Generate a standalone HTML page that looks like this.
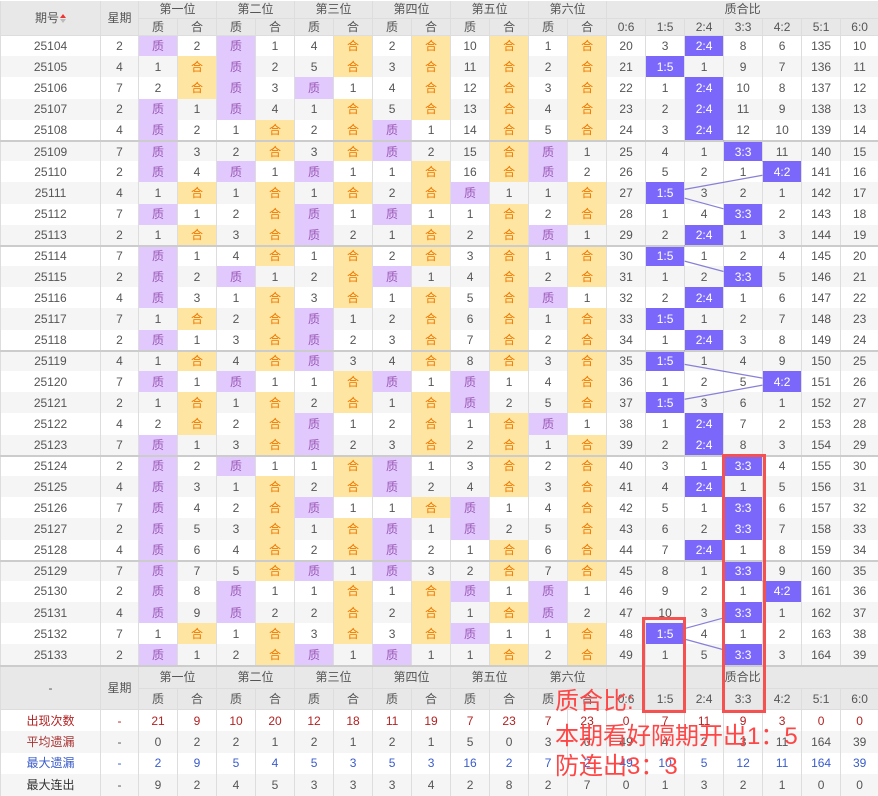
<!DOCTYPE html>
<html><head><meta charset="utf-8">
<style>
*{margin:0;padding:0;box-sizing:border-box}
body{width:878px;height:793px;background:#fff;position:relative;overflow:hidden;font-family:"Liberation Sans","Noto Sans CJK SC",sans-serif;font-size:12px;color:#555}
table{border-collapse:collapse;table-layout:fixed;width:878px;position:absolute;left:0;top:1px}
td,th{text-align:center;vertical-align:middle;padding:0;border-left:1px solid #ddd;border-right:1px solid #ddd;white-space:nowrap;overflow:hidden;line-height:14px}
th{background:#e8e8e8;font-weight:normal;color:#555;border-bottom:1px solid #ddd}
tr.h1 th{height:17px}
tr.h2 th{height:17px}
tbody tr td{height:21.2px}
tbody tr:nth-child(even) td{background:#f5f5f5}
tr.s td{border-top:2px solid #ccc;height:20.2px}
td.z,tbody tr:nth-child(even) td.z{background:#e1c8fd;color:#9b59b6}
td.h,tbody tr:nth-child(even) td.h{background:#fee6a2;color:#f07800}
td.r,tbody tr:nth-child(even) td.r{background:#7b68fa;color:#fff}
.g{border-left:1px solid #c4c4c4}
tr.f1 th{height:23px}
tr.f2 th{height:21px}
.k td{height:21.5px}
.rd td{color:#b22222}
.bl td{color:#3a5ccc}
.sort{display:inline-block;width:6px;height:9px;vertical-align:-1px;margin-left:1px;position:relative}
.sort:before{content:"";position:absolute;left:0;top:0;border:3px solid transparent;border-bottom:4px solid #e33;border-top:0}
.sort:after{content:"";position:absolute;left:0;top:5px;border:3px solid transparent;border-top:4px solid #bbb;border-bottom:0}
.box{position:absolute;border:3px solid #f55151}
.note{position:absolute;left:555px;color:#ff4646;font-size:24px;line-height:24px;font-family:"Liberation Sans","Noto Sans CJK SC",sans-serif;white-space:nowrap}
svg{position:absolute;left:0;top:0}
</style></head><body>
<table id="t">
<colgroup><col style="width:100px"><col style="width:38px"><col span="12" style="width:39px"><col span="6" style="width:39px"><col style="width:38px"></colgroup>
<thead>
<tr class="h1"><th rowspan="2">期号<span class="sort"></span></th><th rowspan="2" class="g">星期</th><th colspan="2" class="g">第一位</th><th colspan="2" class="g">第二位</th><th colspan="2" class="g">第三位</th><th colspan="2" class="g">第四位</th><th colspan="2" class="g">第五位</th><th colspan="2" class="g">第六位</th><th colspan="7" class="g">质合比</th></tr>
<tr class="h2"><th class="g">质</th><th>合</th><th class="g">质</th><th>合</th><th class="g">质</th><th>合</th><th class="g">质</th><th>合</th><th class="g">质</th><th>合</th><th class="g">质</th><th>合</th><th class="g">0:6</th><th>1:5</th><th>2:4</th><th>3:3</th><th>4:2</th><th>5:1</th><th>6:0</th></tr>
</thead>
<tbody>
<tr><td>25104</td><td class="g">2</td><td class="z g">质</td><td>2</td><td class="z g">质</td><td>1</td><td class="g">4</td><td class="h">合</td><td class="g">2</td><td class="h">合</td><td class="g">10</td><td class="h">合</td><td class="g">1</td><td class="h">合</td><td class="g">20</td><td>3</td><td class="r">2:4</td><td>8</td><td>6</td><td>135</td><td>10</td></tr>
<tr><td>25105</td><td class="g">4</td><td class="g">1</td><td class="h">合</td><td class="z g">质</td><td>2</td><td class="g">5</td><td class="h">合</td><td class="g">3</td><td class="h">合</td><td class="g">11</td><td class="h">合</td><td class="g">2</td><td class="h">合</td><td class="g">21</td><td class="r">1:5</td><td>1</td><td>9</td><td>7</td><td>136</td><td>11</td></tr>
<tr><td>25106</td><td class="g">7</td><td class="g">2</td><td class="h">合</td><td class="z g">质</td><td>3</td><td class="z g">质</td><td>1</td><td class="g">4</td><td class="h">合</td><td class="g">12</td><td class="h">合</td><td class="g">3</td><td class="h">合</td><td class="g">22</td><td>1</td><td class="r">2:4</td><td>10</td><td>8</td><td>137</td><td>12</td></tr>
<tr><td>25107</td><td class="g">2</td><td class="z g">质</td><td>1</td><td class="z g">质</td><td>4</td><td class="g">1</td><td class="h">合</td><td class="g">5</td><td class="h">合</td><td class="g">13</td><td class="h">合</td><td class="g">4</td><td class="h">合</td><td class="g">23</td><td>2</td><td class="r">2:4</td><td>11</td><td>9</td><td>138</td><td>13</td></tr>
<tr><td>25108</td><td class="g">4</td><td class="z g">质</td><td>2</td><td class="g">1</td><td class="h">合</td><td class="g">2</td><td class="h">合</td><td class="z g">质</td><td>1</td><td class="g">14</td><td class="h">合</td><td class="g">5</td><td class="h">合</td><td class="g">24</td><td>3</td><td class="r">2:4</td><td>12</td><td>10</td><td>139</td><td>14</td></tr>
<tr class="s"><td>25109</td><td class="g">7</td><td class="z g">质</td><td>3</td><td class="g">2</td><td class="h">合</td><td class="g">3</td><td class="h">合</td><td class="z g">质</td><td>2</td><td class="g">15</td><td class="h">合</td><td class="z g">质</td><td>1</td><td class="g">25</td><td>4</td><td>1</td><td class="r">3:3</td><td>11</td><td>140</td><td>15</td></tr>
<tr><td>25110</td><td class="g">2</td><td class="z g">质</td><td>4</td><td class="z g">质</td><td>1</td><td class="z g">质</td><td>1</td><td class="g">1</td><td class="h">合</td><td class="g">16</td><td class="h">合</td><td class="z g">质</td><td>2</td><td class="g">26</td><td>5</td><td>2</td><td>1</td><td class="r">4:2</td><td>141</td><td>16</td></tr>
<tr><td>25111</td><td class="g">4</td><td class="g">1</td><td class="h">合</td><td class="g">1</td><td class="h">合</td><td class="g">1</td><td class="h">合</td><td class="g">2</td><td class="h">合</td><td class="z g">质</td><td>1</td><td class="g">1</td><td class="h">合</td><td class="g">27</td><td class="r">1:5</td><td>3</td><td>2</td><td>1</td><td>142</td><td>17</td></tr>
<tr><td>25112</td><td class="g">7</td><td class="z g">质</td><td>1</td><td class="g">2</td><td class="h">合</td><td class="z g">质</td><td>1</td><td class="z g">质</td><td>1</td><td class="g">1</td><td class="h">合</td><td class="g">2</td><td class="h">合</td><td class="g">28</td><td>1</td><td>4</td><td class="r">3:3</td><td>2</td><td>143</td><td>18</td></tr>
<tr><td>25113</td><td class="g">2</td><td class="g">1</td><td class="h">合</td><td class="g">3</td><td class="h">合</td><td class="z g">质</td><td>2</td><td class="g">1</td><td class="h">合</td><td class="g">2</td><td class="h">合</td><td class="z g">质</td><td>1</td><td class="g">29</td><td>2</td><td class="r">2:4</td><td>1</td><td>3</td><td>144</td><td>19</td></tr>
<tr class="s"><td>25114</td><td class="g">7</td><td class="z g">质</td><td>1</td><td class="g">4</td><td class="h">合</td><td class="g">1</td><td class="h">合</td><td class="g">2</td><td class="h">合</td><td class="g">3</td><td class="h">合</td><td class="g">1</td><td class="h">合</td><td class="g">30</td><td class="r">1:5</td><td>1</td><td>2</td><td>4</td><td>145</td><td>20</td></tr>
<tr><td>25115</td><td class="g">2</td><td class="z g">质</td><td>2</td><td class="z g">质</td><td>1</td><td class="g">2</td><td class="h">合</td><td class="z g">质</td><td>1</td><td class="g">4</td><td class="h">合</td><td class="g">2</td><td class="h">合</td><td class="g">31</td><td>1</td><td>2</td><td class="r">3:3</td><td>5</td><td>146</td><td>21</td></tr>
<tr><td>25116</td><td class="g">4</td><td class="z g">质</td><td>3</td><td class="g">1</td><td class="h">合</td><td class="g">3</td><td class="h">合</td><td class="g">1</td><td class="h">合</td><td class="g">5</td><td class="h">合</td><td class="z g">质</td><td>1</td><td class="g">32</td><td>2</td><td class="r">2:4</td><td>1</td><td>6</td><td>147</td><td>22</td></tr>
<tr><td>25117</td><td class="g">7</td><td class="g">1</td><td class="h">合</td><td class="g">2</td><td class="h">合</td><td class="z g">质</td><td>1</td><td class="g">2</td><td class="h">合</td><td class="g">6</td><td class="h">合</td><td class="g">1</td><td class="h">合</td><td class="g">33</td><td class="r">1:5</td><td>1</td><td>2</td><td>7</td><td>148</td><td>23</td></tr>
<tr><td>25118</td><td class="g">2</td><td class="z g">质</td><td>1</td><td class="g">3</td><td class="h">合</td><td class="z g">质</td><td>2</td><td class="g">3</td><td class="h">合</td><td class="g">7</td><td class="h">合</td><td class="g">2</td><td class="h">合</td><td class="g">34</td><td>1</td><td class="r">2:4</td><td>3</td><td>8</td><td>149</td><td>24</td></tr>
<tr class="s"><td>25119</td><td class="g">4</td><td class="g">1</td><td class="h">合</td><td class="g">4</td><td class="h">合</td><td class="z g">质</td><td>3</td><td class="g">4</td><td class="h">合</td><td class="g">8</td><td class="h">合</td><td class="g">3</td><td class="h">合</td><td class="g">35</td><td class="r">1:5</td><td>1</td><td>4</td><td>9</td><td>150</td><td>25</td></tr>
<tr><td>25120</td><td class="g">7</td><td class="z g">质</td><td>1</td><td class="z g">质</td><td>1</td><td class="g">1</td><td class="h">合</td><td class="z g">质</td><td>1</td><td class="z g">质</td><td>1</td><td class="g">4</td><td class="h">合</td><td class="g">36</td><td>1</td><td>2</td><td>5</td><td class="r">4:2</td><td>151</td><td>26</td></tr>
<tr><td>25121</td><td class="g">2</td><td class="g">1</td><td class="h">合</td><td class="g">1</td><td class="h">合</td><td class="g">2</td><td class="h">合</td><td class="g">1</td><td class="h">合</td><td class="z g">质</td><td>2</td><td class="g">5</td><td class="h">合</td><td class="g">37</td><td class="r">1:5</td><td>3</td><td>6</td><td>1</td><td>152</td><td>27</td></tr>
<tr><td>25122</td><td class="g">4</td><td class="g">2</td><td class="h">合</td><td class="g">2</td><td class="h">合</td><td class="z g">质</td><td>1</td><td class="g">2</td><td class="h">合</td><td class="g">1</td><td class="h">合</td><td class="z g">质</td><td>1</td><td class="g">38</td><td>1</td><td class="r">2:4</td><td>7</td><td>2</td><td>153</td><td>28</td></tr>
<tr><td>25123</td><td class="g">7</td><td class="z g">质</td><td>1</td><td class="g">3</td><td class="h">合</td><td class="z g">质</td><td>2</td><td class="g">3</td><td class="h">合</td><td class="g">2</td><td class="h">合</td><td class="g">1</td><td class="h">合</td><td class="g">39</td><td>2</td><td class="r">2:4</td><td>8</td><td>3</td><td>154</td><td>29</td></tr>
<tr class="s"><td>25124</td><td class="g">2</td><td class="z g">质</td><td>2</td><td class="z g">质</td><td>1</td><td class="g">1</td><td class="h">合</td><td class="z g">质</td><td>1</td><td class="g">3</td><td class="h">合</td><td class="g">2</td><td class="h">合</td><td class="g">40</td><td>3</td><td>1</td><td class="r">3:3</td><td>4</td><td>155</td><td>30</td></tr>
<tr><td>25125</td><td class="g">4</td><td class="z g">质</td><td>3</td><td class="g">1</td><td class="h">合</td><td class="g">2</td><td class="h">合</td><td class="z g">质</td><td>2</td><td class="g">4</td><td class="h">合</td><td class="g">3</td><td class="h">合</td><td class="g">41</td><td>4</td><td class="r">2:4</td><td>1</td><td>5</td><td>156</td><td>31</td></tr>
<tr><td>25126</td><td class="g">7</td><td class="z g">质</td><td>4</td><td class="g">2</td><td class="h">合</td><td class="z g">质</td><td>1</td><td class="g">1</td><td class="h">合</td><td class="z g">质</td><td>1</td><td class="g">4</td><td class="h">合</td><td class="g">42</td><td>5</td><td>1</td><td class="r">3:3</td><td>6</td><td>157</td><td>32</td></tr>
<tr><td>25127</td><td class="g">2</td><td class="z g">质</td><td>5</td><td class="g">3</td><td class="h">合</td><td class="g">1</td><td class="h">合</td><td class="z g">质</td><td>1</td><td class="z g">质</td><td>2</td><td class="g">5</td><td class="h">合</td><td class="g">43</td><td>6</td><td>2</td><td class="r">3:3</td><td>7</td><td>158</td><td>33</td></tr>
<tr><td>25128</td><td class="g">4</td><td class="z g">质</td><td>6</td><td class="g">4</td><td class="h">合</td><td class="g">2</td><td class="h">合</td><td class="z g">质</td><td>2</td><td class="g">1</td><td class="h">合</td><td class="g">6</td><td class="h">合</td><td class="g">44</td><td>7</td><td class="r">2:4</td><td>1</td><td>8</td><td>159</td><td>34</td></tr>
<tr class="s"><td>25129</td><td class="g">7</td><td class="z g">质</td><td>7</td><td class="g">5</td><td class="h">合</td><td class="z g">质</td><td>1</td><td class="z g">质</td><td>3</td><td class="g">2</td><td class="h">合</td><td class="g">7</td><td class="h">合</td><td class="g">45</td><td>8</td><td>1</td><td class="r">3:3</td><td>9</td><td>160</td><td>35</td></tr>
<tr><td>25130</td><td class="g">2</td><td class="z g">质</td><td>8</td><td class="z g">质</td><td>1</td><td class="g">1</td><td class="h">合</td><td class="g">1</td><td class="h">合</td><td class="z g">质</td><td>1</td><td class="z g">质</td><td>1</td><td class="g">46</td><td>9</td><td>2</td><td>1</td><td class="r">4:2</td><td>161</td><td>36</td></tr>
<tr><td>25131</td><td class="g">4</td><td class="z g">质</td><td>9</td><td class="z g">质</td><td>2</td><td class="g">2</td><td class="h">合</td><td class="g">2</td><td class="h">合</td><td class="g">1</td><td class="h">合</td><td class="z g">质</td><td>2</td><td class="g">47</td><td>10</td><td>3</td><td class="r">3:3</td><td>1</td><td>162</td><td>37</td></tr>
<tr><td>25132</td><td class="g">7</td><td class="g">1</td><td class="h">合</td><td class="g">1</td><td class="h">合</td><td class="g">3</td><td class="h">合</td><td class="g">3</td><td class="h">合</td><td class="z g">质</td><td>1</td><td class="g">1</td><td class="h">合</td><td class="g">48</td><td class="r">1:5</td><td>4</td><td>1</td><td>2</td><td>163</td><td>38</td></tr>
<tr><td>25133</td><td class="g">2</td><td class="z g">质</td><td>1</td><td class="g">2</td><td class="h">合</td><td class="z g">质</td><td>1</td><td class="z g">质</td><td>1</td><td class="g">1</td><td class="h">合</td><td class="g">2</td><td class="h">合</td><td class="g">49</td><td>1</td><td>5</td><td class="r">3:3</td><td>3</td><td>164</td><td>39</td></tr>
</tbody>
<tfoot>
<tr class="f1"><th rowspan="2" style="border-top:2px solid #ccc">-</th><th rowspan="2" class="g" style="border-top:2px solid #ccc">星期</th><th colspan="2" class="g" style="border-top:2px solid #ccc">第一位</th><th colspan="2" class="g" style="border-top:2px solid #ccc">第二位</th><th colspan="2" class="g" style="border-top:2px solid #ccc">第三位</th><th colspan="2" class="g" style="border-top:2px solid #ccc">第四位</th><th colspan="2" class="g" style="border-top:2px solid #ccc">第五位</th><th colspan="2" class="g" style="border-top:2px solid #ccc">第六位</th><th colspan="7" class="g" style="border-top:2px solid #ccc">质合比</th></tr>
<tr class="f2"><th class="g">质</th><th>合</th><th class="g">质</th><th>合</th><th class="g">质</th><th>合</th><th class="g">质</th><th>合</th><th class="g">质</th><th>合</th><th class="g">质</th><th>合</th><th class="g">0:6</th><th>1:5</th><th>2:4</th><th>3:3</th><th>4:2</th><th>5:1</th><th>6:0</th></tr>
<tr class="k rd"><td>出现次数</td><td class="g">-</td><td class="g">21</td><td>9</td><td class="g">10</td><td>20</td><td class="g">12</td><td>18</td><td class="g">11</td><td>19</td><td class="g">7</td><td>23</td><td class="g">7</td><td>23</td><td class="g">0</td><td>7</td><td>11</td><td>9</td><td>3</td><td>0</td><td>0</td></tr>
<tr class="k" style="background:#f5f5f5"><td style="color:#a33">平均遗漏</td><td class="g">-</td><td class="g">0</td><td>2</td><td class="g">2</td><td>1</td><td class="g">2</td><td>1</td><td class="g">2</td><td>1</td><td class="g">5</td><td>0</td><td class="g">3</td><td>0</td><td class="g">49</td><td>4</td><td>2</td><td>3</td><td>11</td><td>164</td><td>39</td></tr>
<tr class="k bl"><td>最大遗漏</td><td class="g">-</td><td class="g">2</td><td>9</td><td class="g">5</td><td>4</td><td class="g">5</td><td>3</td><td class="g">5</td><td>3</td><td class="g">16</td><td>2</td><td class="g">7</td><td>2</td><td class="g">49</td><td>10</td><td>5</td><td>12</td><td>11</td><td>164</td><td>39</td></tr>
<tr class="k" style="background:#f5f5f5"><td style="color:#333">最大连出</td><td class="g">-</td><td class="g">9</td><td>2</td><td class="g">4</td><td>5</td><td class="g">3</td><td>3</td><td class="g">3</td><td>4</td><td class="g">2</td><td>8</td><td class="g">2</td><td>7</td><td class="g">0</td><td>1</td><td>3</td><td>2</td><td>1</td><td>0</td><td>0</td></tr>
</tfoot>
</table>
<svg id="lines" width="878" height="793"></svg>
<div class="box" style="left:642px;top:617px;width:44px;height:96px"></div>
<div class="box" style="left:722px;top:454px;width:44px;height:259px"></div>
<div class="note" style="top:690px">质合比:</div>
<div class="note" style="top:725px">本期看好隔期开出1：5</div>
<div class="note" style="top:755px">防连出3：3</div>
<script>
(function(){
var cells=[].slice.call(document.querySelectorAll('td.r'));
var svg=document.getElementById('lines');var ns='http://www.w3.org/2000/svg';
for(var i=1;i<cells.length;i++){
var a=cells[i-1].getBoundingClientRect(),b=cells[i].getBoundingClientRect();
if(Math.abs(a.left-b.left)<2)continue;
var x1=a.left+a.width/2,y1=a.top+a.height/2,x2=b.left+b.width/2,y2=b.top+b.height/2;
var dx=x2-x1,dy=y2-y1;
var t1=Math.min(a.width/2/Math.abs(dx||1e-9),a.height/2/Math.abs(dy||1e-9));
var t2=Math.min(b.width/2/Math.abs(dx||1e-9),b.height/2/Math.abs(dy||1e-9));
var l=document.createElementNS(ns,'line');
l.setAttribute('x1',x1+dx*t1);l.setAttribute('y1',y1+dy*t1);
l.setAttribute('x2',x2-dx*t2);l.setAttribute('y2',y2-dy*t2);
l.setAttribute('stroke','#8880d8');l.setAttribute('stroke-width','1.2');
svg.appendChild(l);}
})();
</script>
</body></html>
